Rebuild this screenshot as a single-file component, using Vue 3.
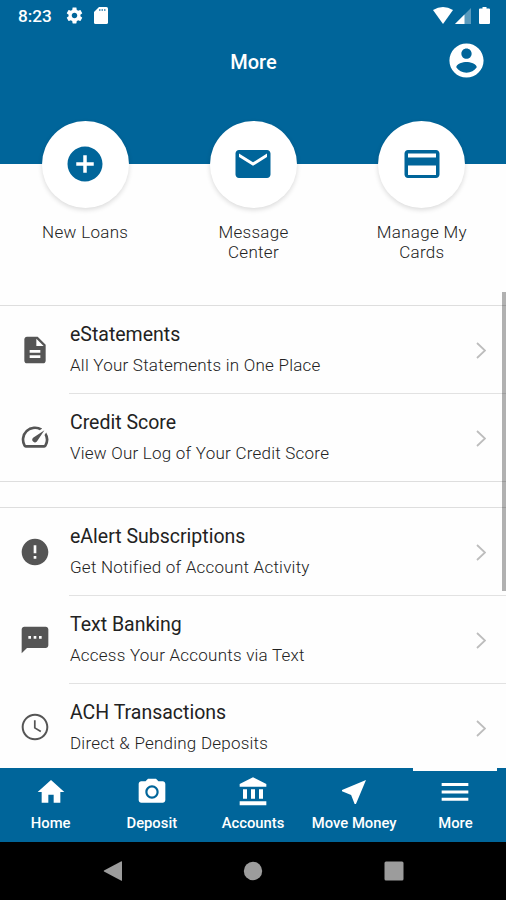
<script setup>
import { ref } from 'vue';

const shortcuts = [
  {
    id: 1,
    lines: ['New Loans'],
    icon: 'M12 2C6.48 2 2 6.48 2 12s4.48 10 10 10 10-4.48 10-10S17.52 2 12 2zm5 11h-4v4h-2v-4H7v-2h4V7h2v4h4v2z'
  },
  {
    id: 2,
    lines: ['Message', 'Center'],
    icon: 'M20 4H4c-1.1 0-2 .9-2 2v12c0 1.1.9 2 2 2h16c1.1 0 2-.9 2-2V6c0-1.1-.9-2-2-2zm0 4l-8 5-8-5V6l8 5 8-5v2z'
  },
  {
    id: 3,
    lines: ['Manage My', 'Cards'],
    icon: 'M20 4H4c-1.11 0-2 .89-2 2v12c0 1.11.89 2 2 2h16c1.11 0 2-.89 2-2V6c0-1.11-.89-2-2-2zm0 14.3H4V12.8h16v5.5zm0-10H4V6h16v2.3z'
  }
];

const groups = [
  [
    {
      id: 1,
      title: 'eStatements',
      text: 'All Your Statements in One Place',
      icon: 'M14 2H6c-1.1 0-1.99.9-1.99 2L4 20c0 1.1.89 2 1.99 2H18c1.1 0 2-.9 2-2V8l-6-6zm2 16H8v-2h8v2zm0-4H8v-2h8v2zm-3-5V3.5L18.5 9H13z'
    },
    {
      id: 2,
      title: 'Credit Score',
      text: 'View Our Log of Your Credit Score',
      icon: 'M20.38 8.57l-1.23 1.85a8 8 0 0 1-.22 7.58H5.07A8 8 0 0 1 15.58 6.85l1.85-1.23A10 10 0 0 0 3.35 19a2 2 0 0 0 1.72 1h13.85a2 2 0 0 0 1.74-1 10 10 0 0 0-.27-10.44zm-9.79 6.84a2 2 0 0 0 2.83 0l5.66-8.49-8.49 5.66a2 2 0 0 0 0 2.83z'
    }
  ],
  [
    {
      id: 3,
      title: 'eAlert Subscriptions',
      text: 'Get Notified of Account Activity',
      icon: 'M12 2C6.48 2 2 6.48 2 12s4.48 10 10 10 10-4.48 10-10S17.52 2 12 2zm1 15h-2v-2h2v2zm0-4h-2V7h2v6z'
    },
    {
      id: 4,
      title: 'Text Banking',
      text: 'Access Your Accounts via Text',
      icon: 'M20 2H4c-1.1 0-1.99.9-1.99 2L2 22l4-4h14c1.1 0 2-.9 2-2V4c0-1.1-.9-2-2-2zM9 11H7V9h2v2zm4 0h-2V9h2v2zm4 0h-2V9h2v2z'
    },
    {
      id: 5,
      title: 'ACH Transactions',
      text: 'Direct & Pending Deposits',
      icon: 'M11.99 2C6.47 2 2 6.48 2 12s4.47 10 9.99 10C17.52 22 22 17.52 22 12S17.52 2 11.99 2zM12 20.5c-4.7 0-8.5-3.8-8.5-8.5S7.3 3.5 12 3.5s8.5 3.8 8.5 8.5-3.8 8.5-8.5 8.5zM12.5 7H11.2v6l4.8 2.9.7-1.1-4.2-2.5z'
    }
  ]
];

const tabs = [
  { name: 'Home', icon: 'M10 20v-6h4v6h5v-8h3L12 3 2 12h3v8z' },
  {
    name: 'Deposit',
    icon: 'M9 2L7.17 4H4c-1.1 0-2 .9-2 2v12c0 1.1.9 2 2 2h16c1.1 0 2-.9 2-2V6c0-1.1-.9-2-2-2h-3.17L15 2H9zm3 15c-2.76 0-5-2.24-5-5s2.24-5 5-5 5 2.24 5 5-2.24 5-5 5zM12 8.6a3.4 3.4 0 1 0 0 6.8 3.4 3.4 0 0 0 0-6.8z'
  },
  {
    name: 'Accounts',
    icon: 'M4.5 10v7h3v-7h-3zm6 0v7h3v-7h-3zM2 22h20v-3H2v3zm14.5-12v7h3v-7h-3zM12 1L2 6v2h20V6L12 1z'
  },
  { name: 'Move Money', icon: 'M21 3L3 10.53v.98l6.84 2.65L12.48 21h.98L21 3z' },
  { name: 'More', icon: 'M2 5.2h20v2.3H2zM2 10.8h20v2.3H2zM2 16.3h20v2.3H2z' }
];

const active = ref('More');
</script>

<template>
  <div class="phone">
    <header>
      <div class="status">
        <span class="time">8:23</span>
        <svg class="gear" viewBox="0 0 24 24">
          <path d="M19.43 12.98c.04-.32.07-.64.07-.98s-.03-.66-.07-.98l2.11-1.65c.19-.15.24-.42.12-.64l-2-3.46c-.12-.22-.39-.3-.61-.22l-2.49 1c-.52-.4-1.08-.73-1.69-.98l-.38-2.65C14.46 2.18 14.25 2 14 2h-4c-.25 0-.46.18-.49.42l-.38 2.65c-.61.25-1.17.59-1.69.98l-2.49-1c-.23-.09-.49 0-.61.22l-2 3.46c-.13.22-.07.49.12.64l2.11 1.65c-.04.32-.07.65-.07.98s.03.66.07.98l-2.11 1.65c-.19.15-.24.42-.12.64l2 3.46c.12.22.39.3.61.22l2.49-1c.52.4 1.08.73 1.69.98l.38 2.65c.03.24.24.42.49.42h4c.25 0 .46-.18.49-.42l.38-2.65c.61-.25 1.17-.59 1.69-.98l2.49 1c.23.09.49 0 .61-.22l2-3.46c.12-.22.07-.49-.12-.64l-2.11-1.65zM12 15.5c-1.93 0-3.5-1.57-3.5-3.5s1.57-3.5 3.5-3.5 3.5 1.57 3.5 3.5-1.57 3.5-3.5 3.5z" />
        </svg>
        <svg class="sd" viewBox="0 0 14 17">
          <path d="M5 0h7.4Q14 0 14 1.6v13.8q0 1.6-1.6 1.6H1.6Q0 17 0 15.4V5z" />
          <path class="sd-pins" d="M5 2h1.5v2H5zM7.5 2H9v2H7.5zM10 2h1.5v2H10z" />
        </svg>
        <span class="space"></span>
        <svg class="wifi" viewBox="0 0 20 17">
          <path d="M0 3Q10-3 20 3L10 17z" />
        </svg>
        <svg class="signal" viewBox="0 0 16 16">
          <path class="dim" d="M16 0v16H0z" />
          <path d="M9.5 6.5V16H0z" />
        </svg>
        <svg class="battery" viewBox="0 0 11 17">
          <path d="M3.5 0h4v1.6H10q1 0 1 1V16q0 1-1 1H1q-1 0-1-1V2.6q0-1 1-1h2.5z" />
        </svg>
      </div>
      <div class="bar">
        <h1>More</h1>
        <svg class="user" viewBox="0 0 24 24">
          <path d="M12 2C6.48 2 2 6.48 2 12s4.48 10 10 10 10-4.48 10-10S17.52 2 12 2zm0 3c1.66 0 3 1.34 3 3s-1.34 3-3 3-3-1.34-3-3 1.34-3 3-3zm0 14.2c-2.5 0-4.71-1.28-6-3.22.03-1.99 4-3.08 6-3.08 1.99 0 5.97 1.09 6 3.08-1.29 1.94-3.5 3.22-6 3.22z" />
        </svg>
      </div>
    </header>

    <section class="shortcuts">
      <div v-for="item in shortcuts" :key="item.id" class="shortcut">
        <div class="circle">
          <svg viewBox="0 0 24 24"><path :d="item.icon" /></svg>
        </div>
        <p><span v-for="line in item.lines" :key="line">{{ line }}</span></p>
      </div>
    </section>

    <main>
      <ul v-for="(group, index) in groups" :key="index">
        <li v-for="row in group" :key="row.id">
          <svg class="row-icon" viewBox="0 0 24 24"><path :d="row.icon" /></svg>
          <div class="row-body">
            <div class="row-text">
              <h2>{{ row.title }}</h2>
              <p>{{ row.text }}</p>
            </div>
            <svg class="chevron" viewBox="0 0 10 17"><path d="M1 1l8 7.5-8 7.5" /></svg>
          </div>
        </li>
      </ul>
      <div class="scrollbar"></div>
    </main>

    <nav>
      <button
        v-for="tab in tabs"
        :key="tab.name"
        type="button"
        :class="{ active: tab.name === active }"
        @click="active = tab.name"
      >
        <svg viewBox="0 0 24 24"><path :d="tab.icon" /></svg>
        <span>{{ tab.name }}</span>
      </button>
    </nav>

    <footer>
      <svg viewBox="0 0 20 20"><path d="M19 .5v19q0 .5-.6.2L1 10.4q-.6-.4 0-.8L18.4.3q.6-.3.6.2z" /></svg>
      <svg viewBox="0 0 20 20"><circle cx="10" cy="10" r="9.2" /></svg>
      <svg viewBox="0 0 20 20"><rect x=".5" y=".5" width="19" height="19" rx="1.5" /></svg>
    </footer>
  </div>
</template>

<style>
body {
  margin: 0;
  background: #fff;
}
</style>

<style scoped>
.phone {
  display: flex;
  flex-direction: column;
  width: 506px;
  height: 900px;
  overflow: hidden;
  background: #fefefe;
  font-family: Roboto, "Liberation Sans", sans-serif;
}
svg {
  display: block;
  flex: none;
  fill: currentColor;
}
h1, h2, p, ul {
  margin: 0;
  padding: 0;
  font-weight: 400;
}

header {
  flex: none;
  height: 163.5px;
  background: #00659a;
  color: #fff;
}
.status {
  display: flex;
  align-items: center;
  height: 31px;
  padding: 0 16px 0 18px;
}
.time {
  width: 46.5px;
  font-size: 17.2px;
  font-weight: 500;
}
.gear {
  width: 19px;
  height: 19px;
  margin-right: 10.5px;
}
.sd {
  width: 14px;
  height: 17px;
}
.sd-pins {
  fill: #5f9dc0;
}
.space {
  flex: 1;
}
.wifi {
  width: 20px;
  height: 17px;
  margin-right: 2px;
}
.signal {
  width: 16px;
  height: 16px;
  margin-right: 8px;
}
.dim {
  opacity: 0.35;
}
.battery {
  width: 11px;
  height: 17px;
}
.bar {
  display: grid;
  grid-template-columns: 60px 1fr 60px;
  align-items: center;
  height: 60px;
}
.bar h1 {
  grid-column: 2;
  padding: 1px 0 0 1px;
  text-align: center;
  font-size: 20px;
  font-weight: 500;
}
.user {
  width: 41px;
  height: 41px;
  margin: 0 0 1px -0.5px;
}

.shortcuts {
  display: grid;
  grid-template-columns: repeat(3, 1fr);
  flex: none;
  height: 171px;
  margin-top: -42.5px;
  padding-left: 1px;
}
.shortcut {
  display: flex;
  flex-direction: column;
  align-items: center;
}
.circle {
  display: flex;
  align-items: center;
  justify-content: center;
  width: 87px;
  height: 87px;
  border-radius: 50%;
  background: #fff;
  box-shadow: 0 2px 5px rgba(0, 0, 0, 0.14);
  color: #00659a;
}
.circle svg {
  width: 42px;
  height: 42px;
  margin-bottom: 1px;
}
.shortcut p {
  margin-top: 14px;
  color: #222;
  font-size: 17px;
  font-weight: 300;
  line-height: 20px;
  letter-spacing: 0.3px;
  text-align: center;
}
.shortcut span {
  display: block;
}

main {
  position: relative;
  flex: 1;
  min-height: 0;
  padding-top: 13px;
  overflow: hidden;
}
ul {
  margin-bottom: 25px;
  border-top: 1.5px solid #dedede;
  border-bottom: 1.5px solid #dedede;
  list-style: none;
}
li {
  display: flex;
  align-items: center;
  height: 88px;
}
li:last-child {
  height: 87px;
}
.row-icon {
  width: 32px;
  height: 32px;
  margin: 0 18px 1px 19px;
  color: #555;
}
.row-body {
  display: flex;
  flex: 1;
  align-items: center;
  height: 100%;
  box-sizing: border-box;
  padding-right: 20px;
  border-bottom: 1.5px solid #e2e2e2;
}
li:last-child .row-body {
  border-bottom: none;
}
.row-text {
  flex: 1;
  padding-left: 1px;
}
.row-text h2 {
  color: #222;
  font-size: 19.5px;
  line-height: 28px;
}
.row-text p {
  margin-top: 3px;
  color: #222;
  font-size: 17px;
  font-weight: 300;
  line-height: 26px;
  letter-spacing: 0.23px;
}
.chevron {
  width: 10px;
  height: 17px;
  margin-top: 2px;
  fill: none;
  stroke: #bdbdbd;
  stroke-width: 1.8;
}
/* thumb lies over the rows and starts above the first one */
.scrollbar {
  position: absolute;
  top: 0;
  right: 0;
  width: 4px;
  height: 299px;
  background: rgba(0, 0, 0, 0.3);
}

nav {
  display: grid;
  grid-template-columns: repeat(5, 1fr);
  flex: none;
  height: 74px;
  background: #00659a;
}
button {
  display: flex;
  flex-direction: column;
  align-items: center;
  padding: 8px 0 0;
  border: none;
  background: none;
  color: #fff;
  font-family: inherit;
  font-size: 14.8px;
  font-weight: 500;
  white-space: nowrap;
}
button svg {
  width: 32px;
  height: 32px;
}
button span {
  margin-top: 6px;
  line-height: 18px;
}
button.active::before {
  content: "";
  width: 84px;
  height: 2.5px;
  margin: -8px 0 5.5px;
  background: #fefefe;
}

footer {
  display: flex;
  flex: none;
  align-items: center;
  justify-content: space-between;
  height: 58px;
  box-sizing: border-box;
  padding: 0 102.5px;
  background: #000;
  color: #9c9c9c;
}
footer svg {
  width: 20px;
  height: 20px;
}
</style>
